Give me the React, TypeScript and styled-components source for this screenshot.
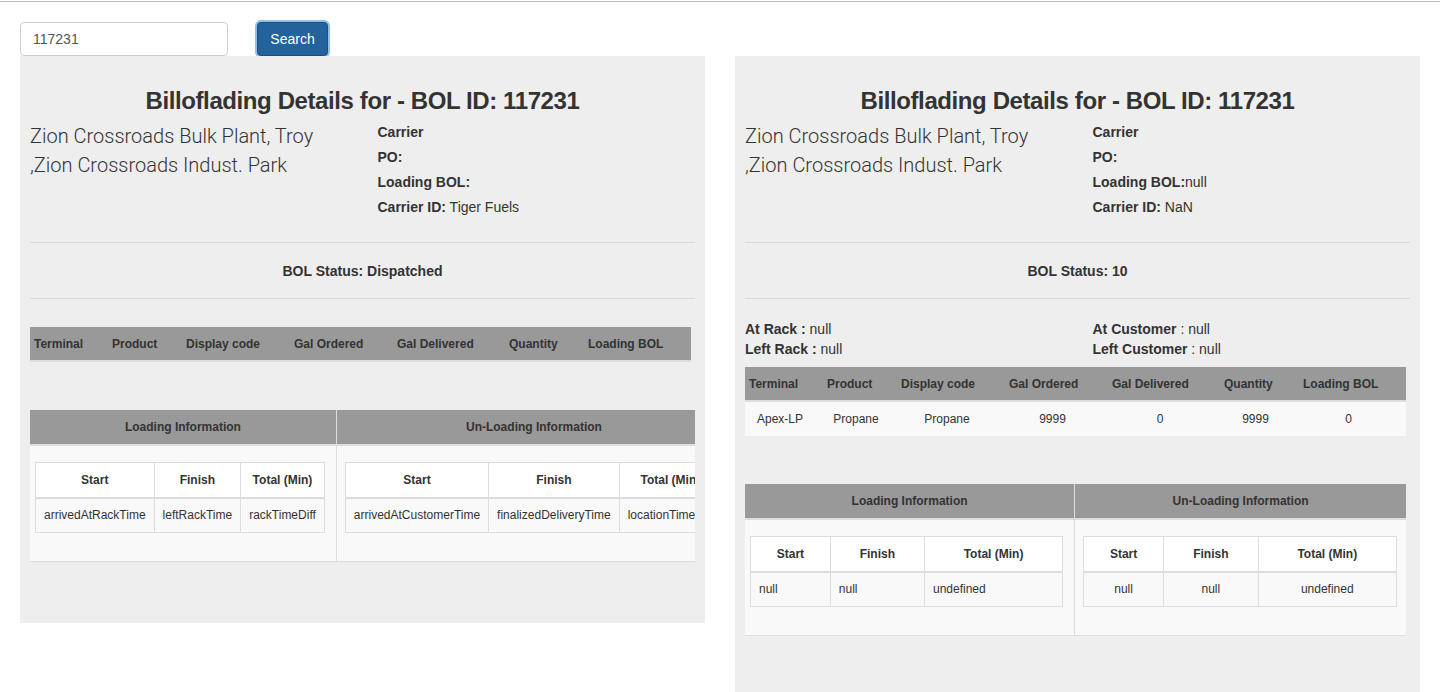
import React from 'react';
import styled, { createGlobalStyle } from 'styled-components';

const Global = createGlobalStyle`
  html, body { margin: 0; padding: 0; background: #fff; }
  body {
    margin-top: 1px;
    border-top: 1px solid #bbb;
    font-family: "Liberation Sans", Arial, Helvetica, sans-serif;
    font-size: 14px;
    color: #333;
  }
  * { box-sizing: border-box; }
`;

const SearchBar = styled.div`
  display: flex;
  align-items: flex-start;
  gap: 29px;
  padding: 19px 20px 0;
`;

const SearchInput = styled.input`
  width: 208px;
  height: 34px;
  margin-top: 1px;
  padding: 0 12px;
  border: 1px solid #ccc;
  border-radius: 4px;
  font-family: "Liberation Sans", Arial, sans-serif;
  font-size: 14px;
  color: #555;
  background: #fff;
  outline: none;
`;

const SearchButton = styled.button`
  width: 71px;
  height: 34px;
  margin-top: 1px;
  border: 1px solid #1b4f82;
  border-radius: 4px;
  background: #23629b;
  color: #fff;
  font-family: "Liberation Sans", Arial, sans-serif;
  font-size: 14px;
  box-shadow: 0 0 0 2px rgba(110, 170, 230, 0.75);
  padding: 0;
`;

const Panels = styled.div`
  display: flex;
  align-items: flex-start;
  gap: 30px;
  padding: 0 20px;
`;

const Panel = styled.section`
  flex: none;
  width: 685px;
  background: #eee;
  padding: 32px 10px 61px;
`;

const Title = styled.h2`
  margin: 0 0 6px;
  font-size: 24px;
  line-height: 26px;
  font-weight: bold;
  letter-spacing: -0.4px;
  text-align: center;
  color: #333;
`;

const InfoRow = styled.div`
  display: grid;
  grid-template-columns: 1fr 1fr;
`;

const Address = styled.div`
  padding-top: 2px;
  font-family: Roboto, "Liberation Sans", Arial, sans-serif;
  font-weight: 300;
  font-size: 20px;
  line-height: 29px;
  color: #333;
`;

const AddressLine = styled.div`
  white-space: nowrap;
`;

const InfoList = styled.div`
  padding-left: 15px;
`;

const InfoLine = styled.div`
  line-height: 25px;
  font-size: 14px;
  b { font-weight: bold; }
`;

const Rule = styled.hr<{ $top?: number }>`
  border: 0;
  border-top: 1px solid #d9d9d9;
  margin: ${p => p.$top ?? 0}px 0 0;
`;

const Status = styled.div`
  padding: 18px 0 17px;
  line-height: 20px;
  text-align: center;
  font-weight: bold;
  font-size: 14px;
`;

const Times = styled.div`
  display: grid;
  grid-template-columns: 1fr 1fr;
  margin-top: 20px;
`;

const TimeCol = styled.div<{ $indent?: boolean }>`
  padding-left: ${p => (p.$indent ? 15 : 0)}px;
`;

const TimeLine = styled.div`
  line-height: 20px;
  font-size: 14px;
`;

const ProductTable = styled.table`
  width: 661px;
  table-layout: fixed;
  border-collapse: collapse;
  margin: 8px 0 48px;
  font-size: 12px;
`;

const ProductHead = styled.th`
  height: 34px;
  padding: 0 0 0 4px;
  background: #999;
  border-bottom: 2px solid #ddd;
  text-align: left;
  font-weight: bold;
  white-space: nowrap;
  color: #333;
`;

const ProductCell = styled.td`
  height: 35px;
  padding: 0 8px 0 0;
  background: #f9f9f9;
  text-align: center;
  color: #333;
`;

const InfoWrap = styled.div`
  width: 100%;
  overflow: hidden;
`;

const InfoTable = styled.table`
  width: 661px;
  border-collapse: collapse;
  font-size: 12px;
`;

const InfoHead = styled.th<{ $divider?: boolean }>`
  height: 35px;
  padding: 0;
  background: #999;
  border-bottom: 2px solid #ddd;
  border-left: ${p => (p.$divider ? '1px solid #ddd' : '0')};
  text-align: center;
  font-weight: bold;
  color: #333;
`;

const InfoCell = styled.td<{ $divider?: boolean }>`
  padding: 16px ${p => (p.$divider ? 9 : 11)}px 28px ${p => (p.$divider ? 8 : 5)}px;
  background: #f9f9f9;
  border-bottom: 1px solid #ddd;
  border-left: ${p => (p.$divider ? '1px solid #ddd' : '0')};
  vertical-align: top;
`;

const TimeTable = styled.table`
  width: 100%;
  border-collapse: collapse;
  font-size: 12px;
`;

const TimeHead = styled.th`
  padding: 8px;
  line-height: 18px;
  background: #fff;
  border: 1px solid #ddd;
  border-bottom: 2px solid #ddd;
  text-align: center;
  font-weight: bold;
  white-space: nowrap;
  color: #333;
`;

const TimeCell = styled.td<{ $align: 'left' | 'center' }>`
  padding: 8px;
  line-height: 17px;
  background: #f9f9f9;
  border: 1px solid #ddd;
  text-align: ${p => p.$align};
  white-space: nowrap;
  color: #333;
`;

type Product = {
  terminal: string;
  product: string;
  display: string;
  ordered: string;
  delivered: string;
  quantity: string;
  loadingBol: string;
};

type PanelData = {
  carrier: string;
  po: string;
  loadingBol: string;
  carrierId: string;
  status: string;
  times?: { atRack: string; leftRack: string; atCustomer: string; leftCustomer: string };
  products: Product[];
  loading: string[];
  unloading: string[];
  loadingAlign: 'left' | 'center';
};

const addressLines = ['Zion Crossroads Bulk Plant, Troy', ',Zion Crossroads Indust. Park'];

const columns: { label: string; width: number }[] = [
  { label: 'Terminal', width: 78 },
  { label: 'Product', width: 74 },
  { label: 'Display code', width: 108 },
  { label: 'Gal Ordered', width: 103 },
  { label: 'Gal Delivered', width: 112 },
  { label: 'Quantity', width: 79 },
  { label: 'Loading BOL', width: 107 },
];

const panels: PanelData[] = [
  {
    carrier: '',
    po: '',
    loadingBol: '',
    carrierId: ' Tiger Fuels',
    status: 'Dispatched',
    products: [],
    loading: ['arrivedAtRackTime', 'leftRackTime', 'rackTimeDiff'],
    unloading: ['arrivedAtCustomerTime', 'finalizedDeliveryTime', 'locationTimeDiff'],
    loadingAlign: 'center',
  },
  {
    carrier: '',
    po: '',
    loadingBol: 'null',
    carrierId: ' NaN',
    status: '10',
    times: { atRack: 'null', leftRack: 'null', atCustomer: 'null', leftCustomer: 'null' },
    products: [
      {
        terminal: 'Apex-LP',
        product: 'Propane',
        display: 'Propane',
        ordered: '9999',
        delivered: '0',
        quantity: '9999',
        loadingBol: '0',
      },
    ],
    loading: ['null', 'null', 'undefined'],
    unloading: ['null', 'null', 'undefined'],
    loadingAlign: 'left',
  },
];

const TimesTable: React.FC<{ values: string[]; align: 'left' | 'center' }> = ({ values, align }) => (
  <TimeTable>
    <thead>
      <tr>
        <TimeHead>Start</TimeHead>
        <TimeHead>Finish</TimeHead>
        <TimeHead>Total (Min)</TimeHead>
      </tr>
    </thead>
    <tbody>
      <tr>
        {values.map((v, i) => (
          <TimeCell key={i} $align={align}>
            {v}
          </TimeCell>
        ))}
      </tr>
    </tbody>
  </TimeTable>
);

const BolPanel: React.FC<{ data: PanelData }> = ({ data }) => (
  <Panel>
    <Title>Billoflading Details for - BOL ID: 117231</Title>
    <InfoRow>
      <Address>
        {addressLines.map(l => (
          <AddressLine key={l}>{l}</AddressLine>
        ))}
      </Address>
      <InfoList>
        <InfoLine>
          <b>Carrier</b>
          {data.carrier}
        </InfoLine>
        <InfoLine>
          <b>PO:</b>
          {data.po}
        </InfoLine>
        <InfoLine>
          <b>Loading BOL:</b>
          {data.loadingBol}
        </InfoLine>
        <InfoLine>
          <b>Carrier ID:</b>
          {data.carrierId}
        </InfoLine>
      </InfoList>
    </InfoRow>
    <Rule $top={22} />
    <Status>BOL Status: {data.status}</Status>
    <Rule />
    <Times>
      {data.times && (
        <>
          <TimeCol>
            <TimeLine>
              <b>At Rack :</b> {data.times.atRack}
            </TimeLine>
            <TimeLine>
              <b>Left Rack :</b> {data.times.leftRack}
            </TimeLine>
          </TimeCol>
          <TimeCol $indent>
            <TimeLine>
              <b>At Customer</b> : {data.times.atCustomer}
            </TimeLine>
            <TimeLine>
              <b>Left Customer</b> : {data.times.leftCustomer}
            </TimeLine>
          </TimeCol>
        </>
      )}
    </Times>
    <ProductTable>
      <colgroup>
        {columns.map(c => (
          <col key={c.label} style={{ width: c.width }} />
        ))}
      </colgroup>
      <thead>
        <tr>
          {columns.map(c => (
            <ProductHead key={c.label}>{c.label}</ProductHead>
          ))}
        </tr>
      </thead>
      <tbody>
        {data.products.map((p, i) => (
          <tr key={i}>
            <ProductCell>{p.terminal}</ProductCell>
            <ProductCell>{p.product}</ProductCell>
            <ProductCell>{p.display}</ProductCell>
            <ProductCell>{p.ordered}</ProductCell>
            <ProductCell>{p.delivered}</ProductCell>
            <ProductCell>{p.quantity}</ProductCell>
            <ProductCell>{p.loadingBol}</ProductCell>
          </tr>
        ))}
      </tbody>
    </ProductTable>
    <InfoWrap>
      <InfoTable>
        <thead>
          <tr>
            <InfoHead>Loading Information</InfoHead>
            <InfoHead $divider>Un-Loading Information</InfoHead>
          </tr>
        </thead>
        <tbody>
          <tr>
            <InfoCell>
              <TimesTable values={data.loading} align={data.loadingAlign} />
            </InfoCell>
            <InfoCell $divider>
              <TimesTable values={data.unloading} align="center" />
            </InfoCell>
          </tr>
        </tbody>
      </InfoTable>
    </InfoWrap>
  </Panel>
);

export default function App() {
  return (
    <>
      <Global />
      <SearchBar>
        <SearchInput defaultValue="117231" />
        <SearchButton>Search</SearchButton>
      </SearchBar>
      <Panels>
        {panels.map((p, i) => (
          <BolPanel key={i} data={p} />
        ))}
      </Panels>
    </>
  );
}
